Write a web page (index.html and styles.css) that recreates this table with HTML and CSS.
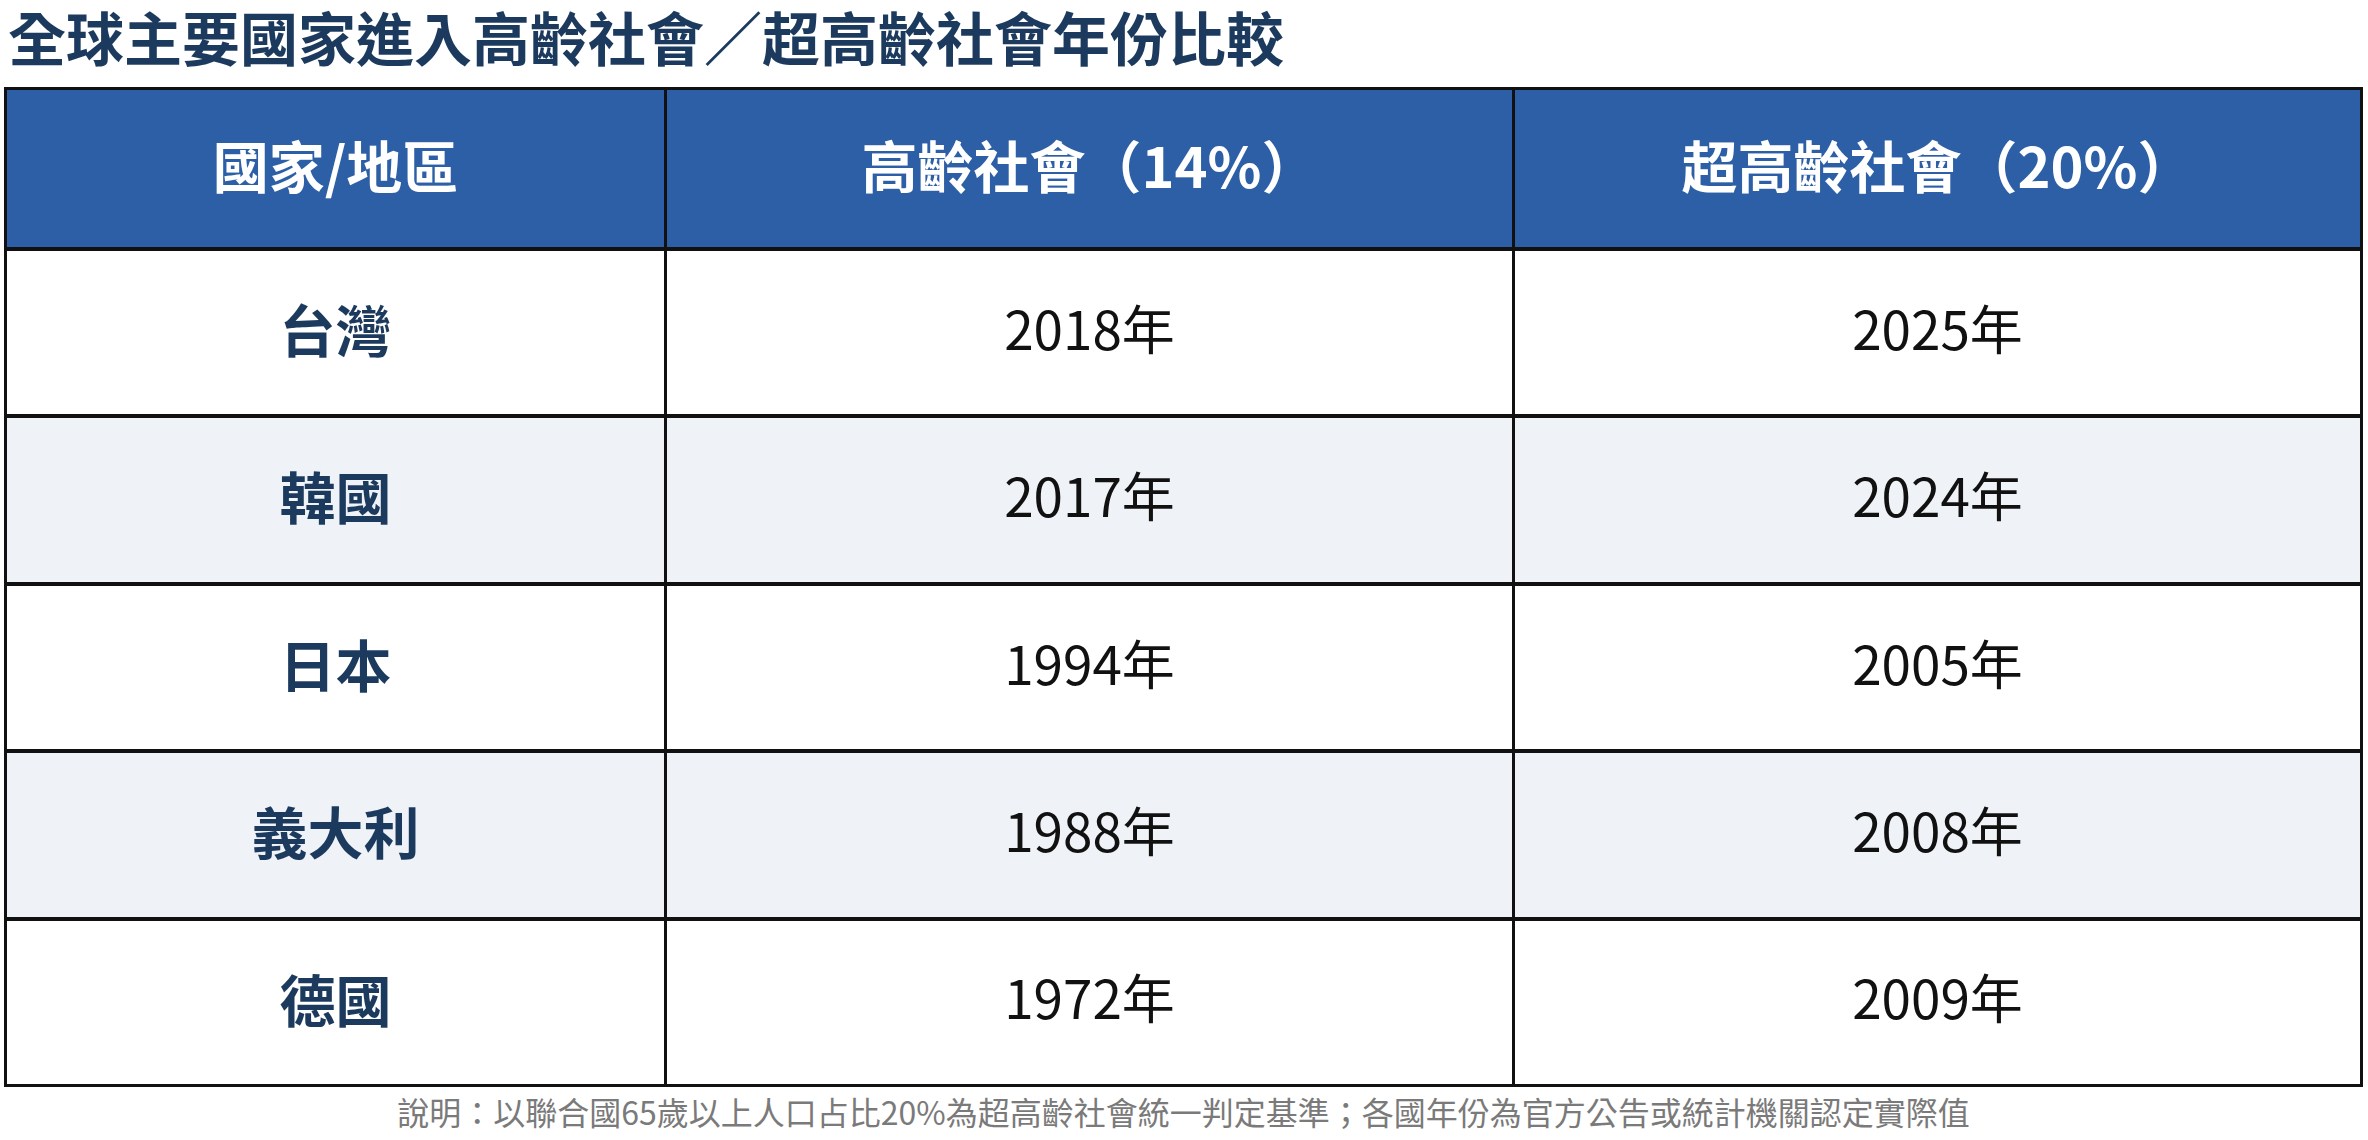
FILE: index.html
```html
<!DOCTYPE html>
<html lang="zh-Hant">
<head>
<meta charset="utf-8">
<title>全球主要國家進入高齡社會／超高齡社會年份比較</title>
<link rel="stylesheet" href="styles.css">
</head>
<body>
<main class="page">
  <h1 class="title">全球主要國家進入高齡社會／超高齡社會年份比較</h1>
  <div class="table" role="table">
    <div class="row head" role="row">
      <div class="cell" role="columnheader">國家/地區</div>
      <div class="cell" role="columnheader">高齡社會（14%）</div>
      <div class="cell" role="columnheader">超高齡社會（20%）</div>
    </div>
    <div class="row" role="row">
      <div class="cell name" role="cell">台灣</div>
      <div class="cell" role="cell">2018年</div>
      <div class="cell" role="cell">2025年</div>
    </div>
    <div class="row alt" role="row">
      <div class="cell name" role="cell">韓國</div>
      <div class="cell" role="cell">2017年</div>
      <div class="cell" role="cell">2024年</div>
    </div>
    <div class="row" role="row">
      <div class="cell name" role="cell">日本</div>
      <div class="cell" role="cell">1994年</div>
      <div class="cell" role="cell">2005年</div>
    </div>
    <div class="row alt" role="row">
      <div class="cell name" role="cell">義大利</div>
      <div class="cell" role="cell">1988年</div>
      <div class="cell" role="cell">2008年</div>
    </div>
    <div class="row" role="row">
      <div class="cell name" role="cell">德國</div>
      <div class="cell" role="cell">1972年</div>
      <div class="cell" role="cell">2009年</div>
    </div>
  </div>
  <p class="note">說明：以聯合國65歲以上人口占比20%為超高齡社會統一判定基準；各國年份為官方公告或統計機關認定實際值</p>
</main>
</body>
</html>
```

FILE: styles.css
```css
html, body {
  margin: 0;
  padding: 0;
  background: #ffffff;
}

body {
  font-family: "Noto Sans CJK TC", "Noto Sans CJK SC", "Noto Sans", sans-serif;
  color: #111111;
}

.page {
  width: 2368px;
  height: 1140px;
  padding: 1px 5px 0 4px;
  box-sizing: border-box;
}

.title {
  margin: 0 0 16px;
  padding: 0 0 0 4px;
  font-size: 58px;
  line-height: 70px;
  font-weight: 700;
  color: #1c3a5d;
  white-space: nowrap;
}

.table {
  display: grid;
  grid-template-columns: 657px 845px 1fr;
  grid-template-rows: 157px repeat(5, 163.4px);
  row-gap: 4px;
  column-gap: 3px;
  padding: 3px;
  background: #111111;
}

.row {
  display: contents;
}

.cell {
  display: flex;
  align-items: center;
  justify-content: center;
  padding-bottom: 10px;
  box-sizing: border-box;
  background: #ffffff;
  font-size: 53px;
  line-height: 1.2;
  font-weight: 400;
  color: #111111;
}

.row.alt .cell {
  background: #eff3f8;
}

.row.head .cell {
  background: #2d5fa6;
  color: #ffffff;
  font-weight: 700;
  font-size: 56px;
}

.cell.name {
  font-size: 56px;
  font-weight: 700;
  color: #1c3a5d;
}

.note {
  margin: 4px 0 0;
  text-align: center;
  font-size: 32px;
  line-height: 40px;
  color: #7a7a7a;
  white-space: nowrap;
}
```
